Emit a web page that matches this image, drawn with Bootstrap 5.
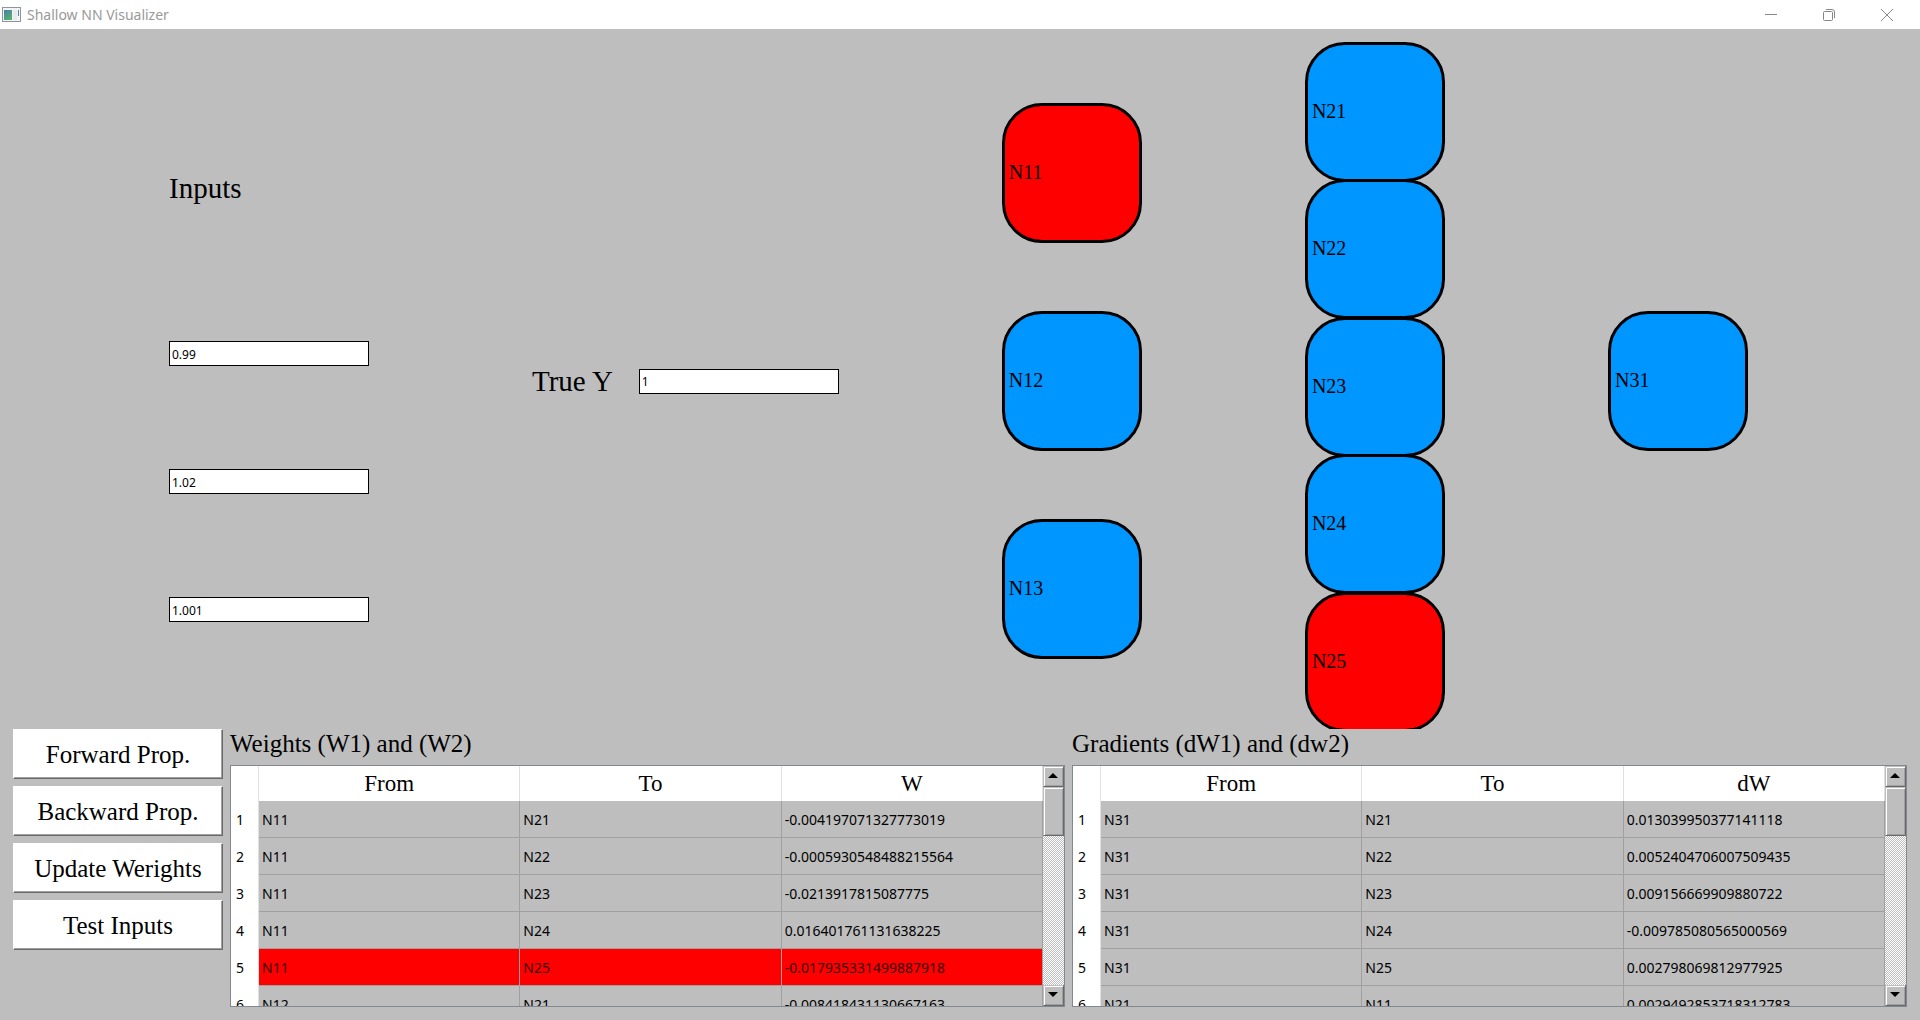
<!DOCTYPE html>
<html lang="en">
<head>
<meta charset="utf-8">
<meta name="viewport" content="width=device-width, initial-scale=1">
<title>Shallow NN Visualizer</title>
<link href="https://cdn.jsdelivr.net/npm/bootstrap@5.3.0/dist/css/bootstrap.min.css" rel="stylesheet">
<style>
  :root { --face: #bebebe; --serif: "Liberation Serif", "Times New Roman", serif; --ui: "Noto Sans", "Segoe UI", sans-serif; }
  body { background: var(--face); color: #000; font: 14px/20px var(--ui); }
  .titlebar { height: 29px; background: #fff; color: #999; padding: 0 4px 0 2px; }
  .titlebar .caption { margin-left: 5px; }
  .winbtn { width: 58px; height: 29px; color: #888; }
  .serif-lg { font: 29px/36px var(--serif); }
  .serif-md { font: 25px/30px var(--serif); }

  .stage { padding-left: 169px; padding-right: 172px; overflow: hidden; min-height: 0; }
  .inputs { padding-top: 141px; }
  .inputs .serif-lg { margin-bottom: 135px; }
  .inputs .fields { gap: 103px; }
  .field { width: 200px; height: 25px; padding: 1px 2px 0; border: 1px solid #000; border-radius: 0; background: #fff; font: 12px/20px var(--ui); color: #000; }
  .truth { margin-left: 163px; gap: 26px; }
  .network { margin-left: 163px; }
  .layer { gap: 68px; }
  .layer-hidden { display: grid; grid-template-rows: repeat(5, minmax(0, 1fr)); padding-top: 13px; min-height: 0; }
  .neuron { width: 140px; height: 140px; border: 3px solid #000; border-radius: 40px; background: #0096ff; padding: 0 0 2px 4px; font: 20px/24px var(--serif); }
  .neuron.active { background: #f00; }

  .bottom { padding: 0 13px 13px; gap: 7px; }
  .actions { width: 210px; gap: 7px; }
  .actbtn { height: 50px; padding: 2px 0 0; background: #fff; color: #000; border: 1px solid; border-color: #fff #696969 #696969 #fff; border-radius: 0; box-shadow: inset -1px -1px #a0a0a0; }
  .panel { min-width: 0; }
  .panel .serif-md { margin-bottom: 6px; }
  .gridbox { height: 242px; border: 1px solid #828790; }
  .viewport { min-width: 0; overflow: hidden; }
  .datagrid { width: 100%; table-layout: fixed; border-collapse: separate; border-spacing: 0; }
  .datagrid .numcol { width: 28px; }
  .datagrid th { background: #fff; font-weight: 400; }
  .datagrid thead th { height: 35px; padding: 0; text-align: center; font: 23px/28px var(--serif); border-right: 1px solid #e0e0e0; }
  .datagrid tbody th { height: 37px; padding: 1px 0 0 5px; border-right: 1px solid #e0e0e0; }
  .datagrid td { height: 37px; padding: 2px 3px 0; border-right: 1px solid #a0a0a0; border-bottom: 1px solid #a0a0a0; }
  .datagrid .hit td { background: #f00; color: #300; }

  .scroller { width: 21px; background: repeating-conic-gradient(#fff 0 25%, var(--face) 0 50%) 0 0 / 2px 2px; }
  .bevel { width: 21px; height: 21px; padding: 0 2px 2px 0; background: var(--face); border: 1px solid; border-color: var(--face) #696969 #696969 var(--face); box-shadow: inset 1px 1px #fff, inset -1px -1px #a0a0a0; }
  .thumb { height: 49px; }
</style>
</head>
<body class="vh-100 d-flex flex-column overflow-hidden">

<header class="titlebar d-flex align-items-center flex-shrink-0">
  <svg width="20" height="17" viewBox="0 0 20 17" aria-hidden="true">
    <defs><linearGradient id="pane" x1="0" y1="0" x2="0.6" y2="1"><stop offset="0" stop-color="#4a7fb0"/><stop offset="1" stop-color="#55b070"/></linearGradient></defs>
    <rect x="0.5" y="1.5" width="18" height="14" fill="#f4f4f4" stroke="#8c969e"/>
    <rect x="2" y="4" width="8" height="10" fill="url(#pane)"/>
    <rect x="11" y="4" width="4" height="10" fill="#e8ebee"/>
    <rect x="16" y="4" width="1" height="6" fill="#4f86a8"/>
  </svg>
  <span class="caption">Shallow NN Visualizer</span>
  <div class="ms-auto d-flex">
    <button type="button" class="winbtn btn border-0 p-0 d-flex align-items-center justify-content-center" aria-label="Minimize"><svg width="12" height="12" stroke="currentColor"><path d="M0 5.5h12"/></svg></button>
    <button type="button" class="winbtn btn border-0 p-0 d-flex align-items-center justify-content-center" aria-label="Restore"><svg width="12" height="12" fill="none" stroke="currentColor"><rect x="0.5" y="2.5" width="9" height="9" rx="1"/><path d="M3 .5h6a2.500 2.500 0 0 1 2.500 2.500v6"/></svg></button>
    <button type="button" class="winbtn btn border-0 p-0 d-flex align-items-center justify-content-center" aria-label="Close"><svg width="12" height="12" fill="none" stroke="currentColor"><path d="M0 0l12 12M12 0L0 12"/></svg></button>
  </div>
</header>

<main class="d-flex flex-column flex-grow-1 overflow-hidden">
  <section class="stage d-flex flex-grow-1">
    <div class="inputs">
      <div class="serif-lg" id="inputs-title">Inputs</div>
      <div class="fields d-flex flex-column" role="group" aria-labelledby="inputs-title">
        <input class="field" type="text" value="0.99" aria-label="Input 1">
        <input class="field" type="text" value="1.02" aria-label="Input 2">
        <input class="field" type="text" value="1.001" aria-label="Input 3">
      </div>
    </div>
    <div class="truth d-flex align-items-center pt-1">
      <label class="serif-lg" for="true-y">True Y</label>
      <input class="field" type="text" id="true-y" value="1">
    </div>
    <div class="network d-flex flex-grow-1 justify-content-between">
      <div class="layer d-flex flex-column justify-content-center pt-1">
        <div class="neuron active d-flex align-items-center">N11</div>
        <div class="neuron d-flex align-items-center">N12</div>
        <div class="neuron d-flex align-items-center">N13</div>
      </div>
      <div class="layer-hidden">
        <div class="neuron d-flex align-items-center">N21</div>
        <div class="neuron d-flex align-items-center">N22</div>
        <div class="neuron d-flex align-items-center">N23</div>
        <div class="neuron d-flex align-items-center">N24</div>
        <div class="neuron active d-flex align-items-center">N25</div>
      </div>
      <div class="layer d-flex flex-column justify-content-center pt-1">
        <div class="neuron d-flex align-items-center">N31</div>
      </div>
    </div>
  </section>

  <section class="bottom d-flex flex-shrink-0">
    <div class="actions d-flex flex-column flex-shrink-0">
      <button type="button" class="actbtn serif-md">Forward Prop.</button>
      <button type="button" class="actbtn serif-md">Backward Prop.</button>
      <button type="button" class="actbtn serif-md">Update Werights</button>
      <button type="button" class="actbtn serif-md">Test Inputs</button>
    </div>

    <div class="panel flex-fill w-50">
      <div class="serif-md" id="w-title">Weights (W1) and (W2)</div>
      <div class="gridbox d-flex">
        <div class="viewport flex-grow-1">
          <table class="datagrid" aria-labelledby="w-title">
            <thead><tr><th class="numcol"></th><th scope="col">From</th><th scope="col">To</th><th scope="col">W</th></tr></thead>
            <tbody>
              <tr><th scope="row">1</th><td>N11</td><td>N21</td><td>-0.004197071327773019</td></tr>
              <tr><th scope="row">2</th><td>N11</td><td>N22</td><td>-0.0005930548488215564</td></tr>
              <tr><th scope="row">3</th><td>N11</td><td>N23</td><td>-0.0213917815087775</td></tr>
              <tr><th scope="row">4</th><td>N11</td><td>N24</td><td>0.016401761131638225</td></tr>
              <tr class="hit"><th scope="row">5</th><td>N11</td><td>N25</td><td>-0.017935331499887918</td></tr>
              <tr><th scope="row">6</th><td>N12</td><td>N21</td><td>-0.008418431130667163</td></tr>
            </tbody>
          </table>
        </div>
        <div class="scroller d-flex flex-column flex-shrink-0">
          <button type="button" class="bevel d-flex align-items-center justify-content-center" aria-label="Scroll up"><svg width="10" height="5"><path d="M0 5L5 0l5 5z"/></svg></button>
          <div class="bevel thumb"></div>
          <button type="button" class="bevel mt-auto d-flex align-items-center justify-content-center" aria-label="Scroll down"><svg width="10" height="5"><path d="M0 0l5 5 5-5z"/></svg></button>
        </div>
      </div>
    </div>

    <div class="panel flex-fill w-50">
      <div class="serif-md" id="g-title">Gradients (dW1) and (dw2)</div>
      <div class="gridbox d-flex">
        <div class="viewport flex-grow-1">
          <table class="datagrid" aria-labelledby="g-title">
            <thead><tr><th class="numcol"></th><th scope="col">From</th><th scope="col">To</th><th scope="col">dW</th></tr></thead>
            <tbody>
              <tr><th scope="row">1</th><td>N31</td><td>N21</td><td>0.013039950377141118</td></tr>
              <tr><th scope="row">2</th><td>N31</td><td>N22</td><td>0.0052404706007509435</td></tr>
              <tr><th scope="row">3</th><td>N31</td><td>N23</td><td>0.009156669909880722</td></tr>
              <tr><th scope="row">4</th><td>N31</td><td>N24</td><td>-0.009785080565000569</td></tr>
              <tr><th scope="row">5</th><td>N31</td><td>N25</td><td>0.002798069812977925</td></tr>
              <tr><th scope="row">6</th><td>N21</td><td>N11</td><td>0.0029492853718312783</td></tr>
            </tbody>
          </table>
        </div>
        <div class="scroller d-flex flex-column flex-shrink-0">
          <button type="button" class="bevel d-flex align-items-center justify-content-center" aria-label="Scroll up"><svg width="10" height="5"><path d="M0 5L5 0l5 5z"/></svg></button>
          <div class="bevel thumb"></div>
          <button type="button" class="bevel mt-auto d-flex align-items-center justify-content-center" aria-label="Scroll down"><svg width="10" height="5"><path d="M0 0l5 5 5-5z"/></svg></button>
        </div>
      </div>
    </div>
  </section>
</main>

<script src="https://cdn.jsdelivr.net/npm/bootstrap@5.3.0/dist/js/bootstrap.bundle.min.js"></script>
</body>
</html>
